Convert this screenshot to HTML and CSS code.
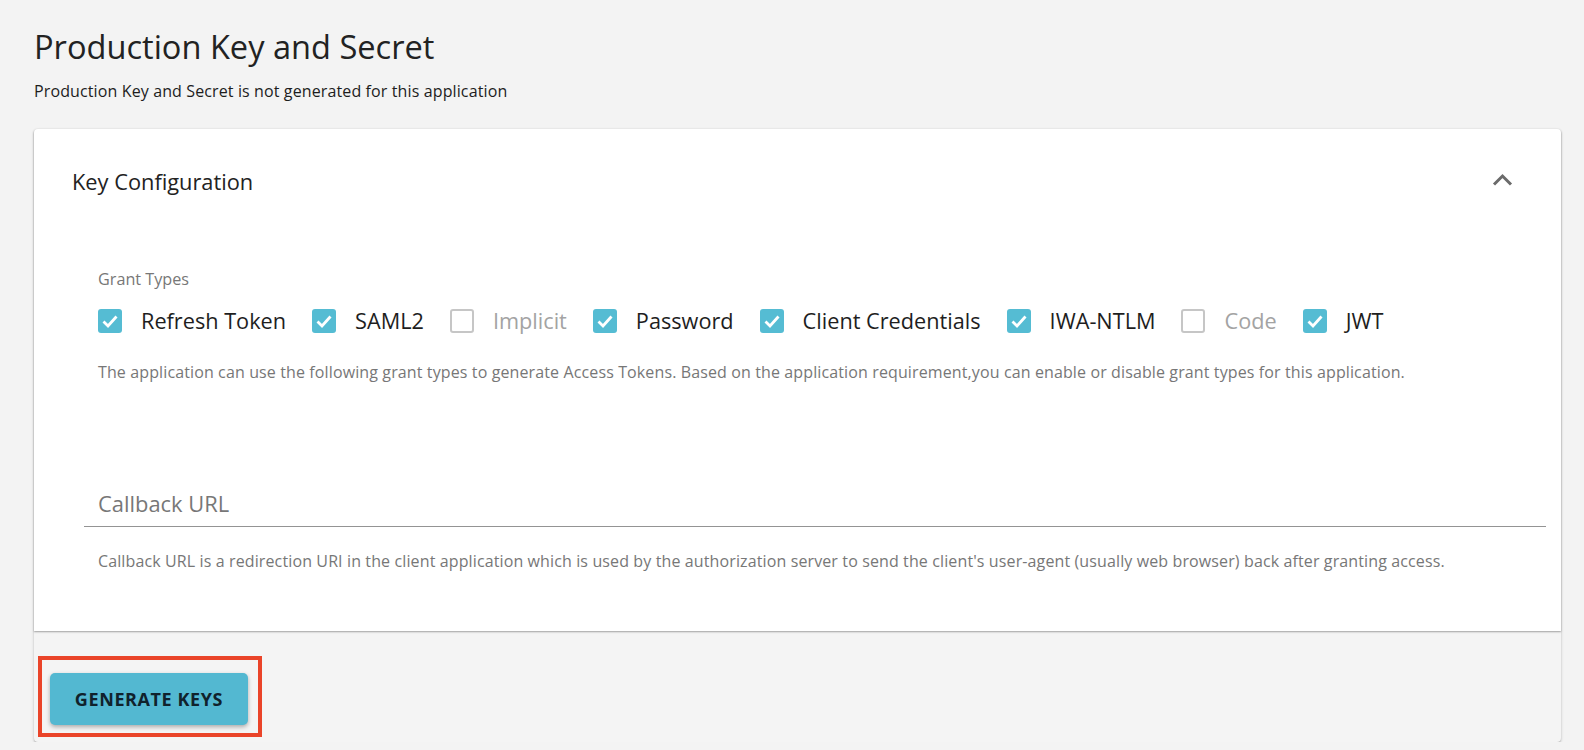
FILE: index.html
```html
<!DOCTYPE html>
<html lang="en">
<head>
<meta charset="utf-8">
<title>Production Key and Secret</title>
<link rel="stylesheet" href="styles.css">
</head>
<body>
<div class="page">
  <h1 class="title">Production Key and Secret</h1>
  <p class="subtitle">Production Key and Secret is not generated for this application</p>
  <div class="card">
    <div class="panel">
      <div class="panel-head">
        <span class="panel-title">Key Configuration</span>
        <svg class="chevron" width="21" height="14" viewBox="0 0 21 14"><polyline points="2,11.5 10.5,3 19,11.5" fill="none" stroke="#6b6b6b" stroke-width="3"/></svg>
      </div>
      <div class="panel-body">
        <div class="grant-label">Grant Types</div>
        <div class="grant-row">
          <label class="opt"><span class="box on"><svg viewBox="0 0 24 24"><polyline points="5.5,12.5 10,17 18.5,7.5" fill="none" stroke="#fff" stroke-width="2.8"/></svg></span><span class="opt-text">Refresh Token</span></label>
          <label class="opt"><span class="box on"><svg viewBox="0 0 24 24"><polyline points="5.5,12.5 10,17 18.5,7.5" fill="none" stroke="#fff" stroke-width="2.8"/></svg></span><span class="opt-text">SAML2</span></label>
          <label class="opt off"><span class="box"></span><span class="opt-text">Implicit</span></label>
          <label class="opt"><span class="box on"><svg viewBox="0 0 24 24"><polyline points="5.5,12.5 10,17 18.5,7.5" fill="none" stroke="#fff" stroke-width="2.8"/></svg></span><span class="opt-text">Password</span></label>
          <label class="opt"><span class="box on"><svg viewBox="0 0 24 24"><polyline points="5.5,12.5 10,17 18.5,7.5" fill="none" stroke="#fff" stroke-width="2.8"/></svg></span><span class="opt-text">Client Credentials</span></label>
          <label class="opt"><span class="box on"><svg viewBox="0 0 24 24"><polyline points="5.5,12.5 10,17 18.5,7.5" fill="none" stroke="#fff" stroke-width="2.8"/></svg></span><span class="opt-text">IWA-NTLM</span></label>
          <label class="opt off"><span class="box"></span><span class="opt-text">Code</span></label>
          <label class="opt"><span class="box on"><svg viewBox="0 0 24 24"><polyline points="5.5,12.5 10,17 18.5,7.5" fill="none" stroke="#fff" stroke-width="2.8"/></svg></span><span class="opt-text">JWT</span></label>
        </div>
        <p class="helper grant-help">The application can use the following grant types to generate Access Tokens. Based on the application requirement,you can enable or disable grant types for this application.</p>
        <div class="field"><div class="field-input">Callback URL</div></div>
        <p class="helper callback-help">Callback URL is a redirection URI in the client application which is used by the authorization server to send the client's user-agent (usually web browser) back after granting access.</p>
      </div>
    </div>
    <div class="card-foot">
      <div class="highlight"><button class="gen-btn">GENERATE KEYS</button></div>
    </div>
  </div>
</div>
</body>
</html>
```
FILE: styles.css
```css
html, body {
  margin: 0;
  padding: 0;
  background: #f3f3f3;
  font-family: "Open Sans", "Noto Sans", sans-serif;
  color: #222;
}
.page {
  padding: 27px 23px 0 34px;
}
.title {
  margin: 0;
  font-size: 32.6px;
  line-height: 40px;
  font-weight: 400;
  color: #222;
}
.subtitle {
  margin: 14px 0 0;
  font-size: 16px;
  line-height: 20px;
  letter-spacing: 0.12px;
  color: #1d1d1d;
}
.card {
  margin-top: 28px;
  background: #f4f4f4;
  border-radius: 4px;
  box-shadow: 0 1px 3px rgba(0,0,0,0.22), 0 1px 1px rgba(0,0,0,0.12);
  padding-bottom: 5px;
}
.panel {
  background: #fff;
  border-radius: 4px 4px 0 0;
  box-shadow: 0 1px 2px rgba(0,0,0,0.35);
  padding-bottom: 60px;
}
.panel-head {
  height: 106px;
  display: flex;
  align-items: center;
  justify-content: space-between;
  padding: 0 48px 0 38px;
}
.panel-title {
  font-size: 21.8px;
  line-height: 28px;
  color: #222;
}
.chevron {
  display: block;
  margin-top: -4px;
}
.panel-body {
  padding: 34px 15px 0 50px;
}
.grant-label {
  padding-left: 14px;
  font-size: 16.2px;
  line-height: 20px;
  color: #777;
}
.grant-row {
  margin-top: 8px;
  padding-left: 14px;
  height: 48px;
  display: flex;
  align-items: center;
}
.opt {
  display: flex;
  align-items: center;
  margin-right: 26px;
}
.box {
  width: 24px;
  height: 24px;
  box-sizing: border-box;
  border-radius: 3px;
  border: 2px solid #c6c6c6;
  margin-right: 19px;
}
.box.on {
  background: #55bcd3;
  border: none;
}
.box svg {
  display: block;
  width: 24px;
  height: 24px;
}
.opt-text {
  font-size: 21.7px;
  line-height: 28px;
  color: #1e1e1e;
}
.opt.off .opt-text {
  color: #a3a3a3;
}
.helper {
  margin: 0;
  padding-left: 14px;
  font-size: 16px;
  line-height: 20px;
  letter-spacing: 0.12px;
  color: #777;
}
.grant-help {
  margin-top: 17px;
}
.field {
  margin-top: 108px;
  border-bottom: 1px solid #949494;
  padding-bottom: 8px;
}
.field-input {
  padding-left: 14px;
  font-size: 21.9px;
  line-height: 28px;
  color: #777;
}
.callback-help {
  margin-top: 24px;
}
.card-foot {
  padding: 25px 0 0 4px;
}
.highlight {
  display: inline-block;
  border: 4px solid #ea4429;
  padding: 13px 10px 8px 8px;
}
.gen-btn {
  display: block;
  width: 198px;
  height: 52px;
  border: none;
  border-radius: 5px;
  background: #53b8d1;
  box-shadow: 0 2px 4px rgba(0,0,0,0.3);
  font-family: "Open Sans", "Noto Sans", sans-serif;
  font-weight: 700;
  font-size: 18px;
  color: #10222c;
  letter-spacing: 0.6px;
  padding: 0;
}
```
